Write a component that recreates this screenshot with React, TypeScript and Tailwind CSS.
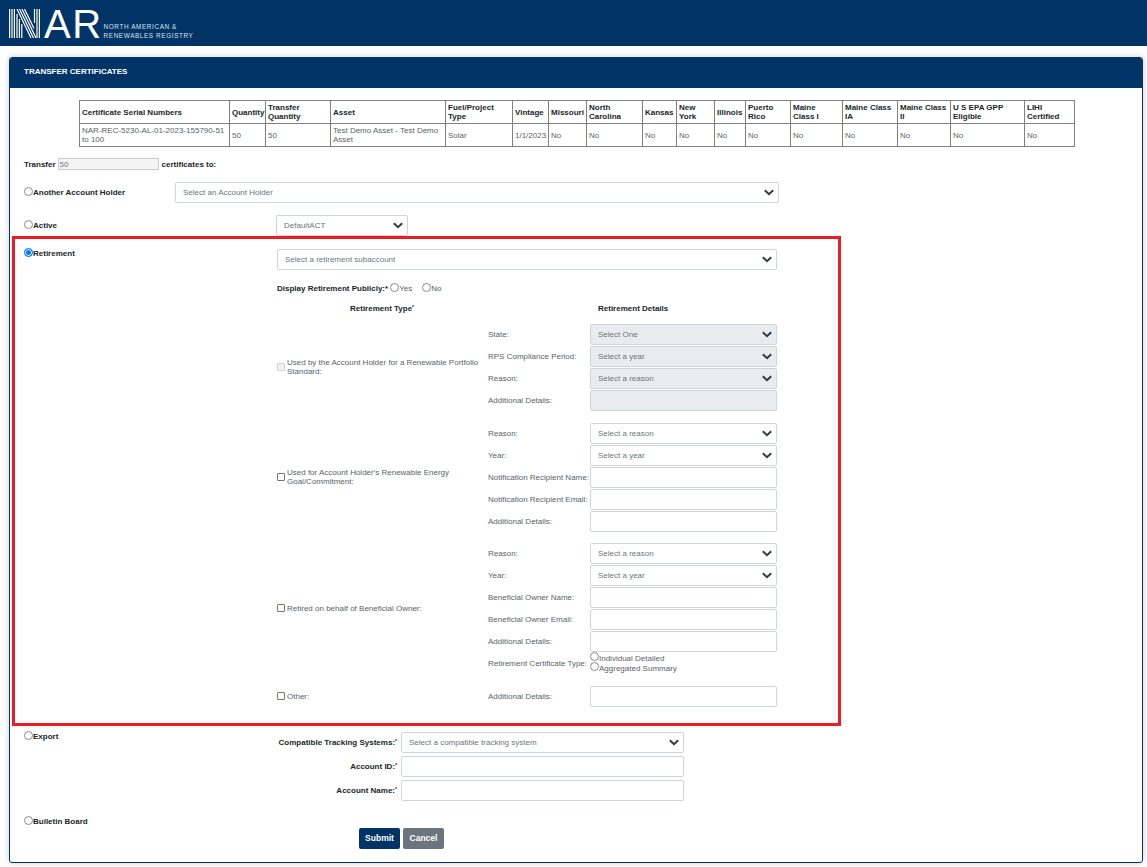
import React from "react";

function Chevron() {
  return (
    <svg width="10" height="7" viewBox="0 0 10 7" className="shrink-0">
      <path d="M0.8 1.2 L5 5.2 L9.2 1.2" fill="none" stroke="#343a40" strokeWidth="2" />
    </svg>
  );
}

function Select({ text, className = "", disabled = false }: { text: string; className?: string; disabled?: boolean }) {
  return (
    <div
      className={`flex h-[21px] items-center justify-between rounded-[2px] border border-[#ced4da] pl-[7px] pr-[4px] text-[#6c757d] ${disabled ? "bg-[#e9ecef]" : "bg-white"} ${className}`}
    >
      <span>{text}</span>
      <Chevron />
    </div>
  );
}

function Box({ disabled = false, className = "" }: { disabled?: boolean; className?: string }) {
  return <input type="text" disabled={disabled} className={`block h-[21px] w-full rounded-[2px] border border-[#ced4da] ${disabled ? "bg-[#e9ecef]" : "bg-white"} ${className}`} />;
}

function Radio({ checked = false, name }: { checked?: boolean; name: string }) {
  return (
    <input
      type="radio"
      name={name}
      defaultChecked={checked}
      className="m-0 -mt-[3px] h-[9px] w-[9px] shrink-0 appearance-none rounded-full border border-[#8a8a8a] bg-white checked:border-[#0075ff] checked:bg-[#0075ff] checked:shadow-[inset_0_0_0_1px_white]"
    />
  );
}

const headers: [React.ReactNode, number][] = [
  ["Certificate Serial Numbers", 150],
  ["Quantity", 36],
  ["Transfer Quantity", 65],
  ["Asset", 115],
  ["Fuel/Project Type", 67],
  ["Vintage", 36],
  ["Missouri", 38],
  ["North Carolina", 56],
  ["Kansas", 34],
  ["New York", 38],
  ["Illinois", 31],
  ["Puerto Rico", 45],
  [<>Maine<br />Class I</>, 52],
  ["Maine Class IA", 55],
  ["Maine Class II", 53],
  ["U S EPA GPP Eligible", 74],
  ["LIHI Certified", 50],
];

const cells = [
  "NAR-REC-5230-AL-01-2023-155790-51 to 100",
  "50",
  "50",
  "Test Demo Asset - Test Demo Asset",
  "Solar",
  "1/1/2023",
  "No", "No", "No", "No", "No", "No", "No", "No", "No", "No", "No",
];

function Field({ label, children }: { label: string; children: React.ReactNode }) {
  return (
    <div className="flex h-[22px] items-center">
      <span className="w-[102px] shrink-0 whitespace-nowrap text-[#5a6268]">{label}</span>
      <div className="w-[187px]">{children}</div>
    </div>
  );
}

function Group({ label, children, disabled = false, className = "" }: { label: string; children: React.ReactNode; disabled?: boolean; className?: string }) {
  return (
    <div className={`flex items-center ${className}`}>
      <label className="flex w-[211px] shrink-0 items-center pr-[8px] leading-[9px] text-[#5a6268]">
        <input
          type="checkbox"
          disabled={disabled}
          className="m-0 mr-[2px] h-[8px] w-[8px] shrink-0 appearance-none rounded-[1px] border border-[#767676] bg-white disabled:border-[#d0d0d0] disabled:bg-[#f2f2f2]"
        />
        <span>{label}</span>
      </label>
      <div>{children}</div>
    </div>
  );
}

export default function App() {
  return (
    <div className="min-h-[867px] bg-white text-[8px] leading-[11px] text-[#212529]" style={{ fontFamily: '"Liberation Sans", Arial, sans-serif' }}>
      <header className="flex h-[46px] items-center bg-[#003366] pl-[9px] text-white">
        <svg width="31" height="29" viewBox="0 0 31 29" className="mt-[1px] shrink-0">
          <g stroke="#fff" strokeWidth="1.2" fill="none">
            <path d="M0.6 0V29M3 0V29M5.4 0V29" />
            <path d="M8 0 L22 29M10.5 0 L24.5 29M13 0 L27 29M15.5 0 L25 19.5" />
            <path d="M8 5V29M10.4 10V29M12.8 15V29" />
            <path d="M25.5 0V14M28 0V29M30.4 0V29" />
          </g>
        </svg>
        <span className="ml-[4px] mt-[1px] text-[40px] leading-none font-normal tracking-[1.5px]">AR</span>
        <span className="ml-[1px] mt-[16px] whitespace-nowrap text-[6.4px] leading-[9px] tracking-[0.6px] text-[#dfe6ee]">
          NORTH AMERICAN &amp;
          <br />
          RENEWABLES REGISTRY
        </span>
      </header>

      <main className="pl-[9px] pr-[4px] pt-[11px]">
        <section className="h-[806px] overflow-hidden rounded-[3px] border border-[#003366] shadow-[0_0_6px_rgba(0,0,0,0.2)]">
          <h1 className="flex h-[30px] items-center bg-[#003366] pb-[3px] pl-[14px] text-[8px] font-bold text-white">TRANSFER CERTIFICATES</h1>

          <div className="pl-[2px]">
            <table className="ml-[67px] mt-[12px] table-fixed border-collapse border border-[#808080]" style={{ width: 995 }}>
              <colgroup>
                {headers.map(([, w], i) => (
                  <col key={i} style={{ width: w }} />
                ))}
              </colgroup>
              <thead>
                <tr className="h-[23px]">
                  {headers.map(([h], i) => (
                    <th key={i} className="border border-[#808080] px-[2px] text-left align-middle leading-[9px] font-bold text-[#212529]">{h}</th>
                  ))}
                </tr>
              </thead>
              <tbody>
                <tr className="h-[23px]">
                  {cells.map((c, i) => (
                    <td key={i} className="border border-[#808080] px-[2px] align-middle leading-[9px] text-[#5a6268]">{c}</td>
                  ))}
                </tr>
              </tbody>
            </table>

            <div className="ml-[12px] mt-[11px] flex items-center font-bold">
              <span>Transfer</span>
              <input disabled defaultValue="50" className="ml-[2px] mr-[3px] h-[12px] w-[101px] border border-[#ccc] bg-[#f4f4f4] pl-[1px] text-[8px] font-normal text-[#777]" />
              <span>certificates to:</span>
            </div>

            <div className="ml-[12px] mt-[12px] flex items-center">
              <label className="flex w-[151px] shrink-0 items-center font-bold"><Radio name="t" /><span>Another Account Holder</span></label>
              <Select text="Select an Account Holder" className="w-[604px]" />
            </div>

            <div className="ml-[12px] mt-[12px] flex items-center">
              <label className="flex w-[252px] shrink-0 items-center font-bold"><Radio name="t" /><span>Active</span></label>
              <Select text="DefaultACT" className="w-[132px]" />
            </div>
          </div>

          <div className="ml-[2px] h-[490px] w-[829px] border-[3px] border-[#ed1c24]">
            <div className="flex pl-[9px] pt-[10px]">
              <label className="-mt-[1px] flex h-[11px] w-[253px] shrink-0 items-center font-bold"><Radio name="t" checked /><span>Retirement</span></label>
              <div className="w-[500px]">
                <Select text="Select a retirement subaccount" className="w-[500px]" />
                <div className="mt-[13px] flex items-center font-bold">
                  <span>Display Retirement Publicly:*</span>
                  <span className="w-[2px]" />
                  <Radio name="pub" /><span className="font-normal text-[#5a6268]">Yes</span>
                  <span className="w-[10px]" />
                  <Radio name="pub" /><span className="font-normal text-[#5a6268]">No</span>
                </div>
                <div className="mt-[9px] flex font-bold">
                  <span className="w-[321px] pl-[73px]">Retirement Type<sup className="text-[5px]">*</sup></span>
                  <span>Retirement Details</span>
                </div>
                <Group label="Used by the Account Holder for a Renewable Portfolio Standard:" disabled className="mt-[9px]">
                  <Field label="State:"><Select disabled text="Select One" /></Field>
                  <Field label="RPS Compliance Period:"><Select disabled text="Select a year" /></Field>
                  <Field label="Reason:"><Select disabled text="Select a reason" /></Field>
                  <Field label="Additional Details:"><Box disabled /></Field>
                </Group>
                <Group label="Used for Account Holder's Renewable Energy Goal/Commitment:" className="mt-[11px]">
                  <Field label="Reason:"><Select text="Select a reason" /></Field>
                  <Field label="Year:"><Select text="Select a year" /></Field>
                  <Field label="Notification Recipient Name:"><Box /></Field>
                  <Field label="Notification Recipient Email:"><Box /></Field>
                  <Field label="Additional Details:"><Box /></Field>
                </Group>
                <Group label="Retired on behalf of Beneficial Owner:" className="mt-[10px]">
                  <Field label="Reason:"><Select text="Select a reason" /></Field>
                  <Field label="Year:"><Select text="Select a year" /></Field>
                  <Field label="Beneficial Owner Name:"><Box /></Field>
                  <Field label="Beneficial Owner Email:"><Box /></Field>
                  <Field label="Additional Details:"><Box /></Field>
                  <Field label="Retirement Certificate Type:">
                    <div className="text-[#5a6268]">
                      <label className="flex h-[10px] items-center"><Radio name="c" /><span>Individual Detailed</span></label>
                      <label className="flex h-[10px] items-center"><Radio name="c" /><span>Aggregated Summary</span></label>
                    </div>
                  </Field>
                </Group>
                <Group label="Other:" className="mt-[11px]">
                  <Field label="Additional Details:"><Box /></Field>
                </Group>
              </div>
            </div>
          </div>

          <div className="ml-[14px] mt-[5px] flex">
            <label className="flex h-[11px] w-[253px] shrink-0 items-center font-bold"><Radio name="t" /><span>Export</span></label>
            <div className="mt-[1px] font-bold">
              <div className="flex items-center">
                <span className="mr-[4px] w-[120px] whitespace-nowrap text-right">Compatible Tracking Systems:<sup className="text-[5px]">*</sup></span>
                <Select text="Select a compatible tracking system" className="w-[283px] font-normal" />
              </div>
              <div className="mt-[3px] flex items-center">
                <span className="mr-[4px] w-[120px] text-right">Account ID:<sup className="text-[5px]">*</sup></span>
                <Box className="!w-[283px]" />
              </div>
              <div className="mt-[3px] flex items-center">
                <span className="mr-[4px] w-[120px] text-right">Account Name:<sup className="text-[5px]">*</sup></span>
                <Box className="!w-[283px]" />
              </div>
            </div>
          </div>

          <label className="ml-[14px] mt-[15px] flex h-[11px] items-center font-bold"><Radio name="t" /><span>Bulletin Board</span></label>

          <div className="ml-[349px] mt-[1px] flex gap-[3px] font-bold text-white">
            <button className="h-[21px] w-[41px] rounded-[2px] bg-[#003366] text-[8.5px] font-bold">Submit</button>
            <button className="h-[21px] w-[41px] rounded-[2px] bg-[#6c757d] text-[8.5px] font-bold">Cancel</button>
          </div>
        </section>
      </main>
    </div>
  );
}
